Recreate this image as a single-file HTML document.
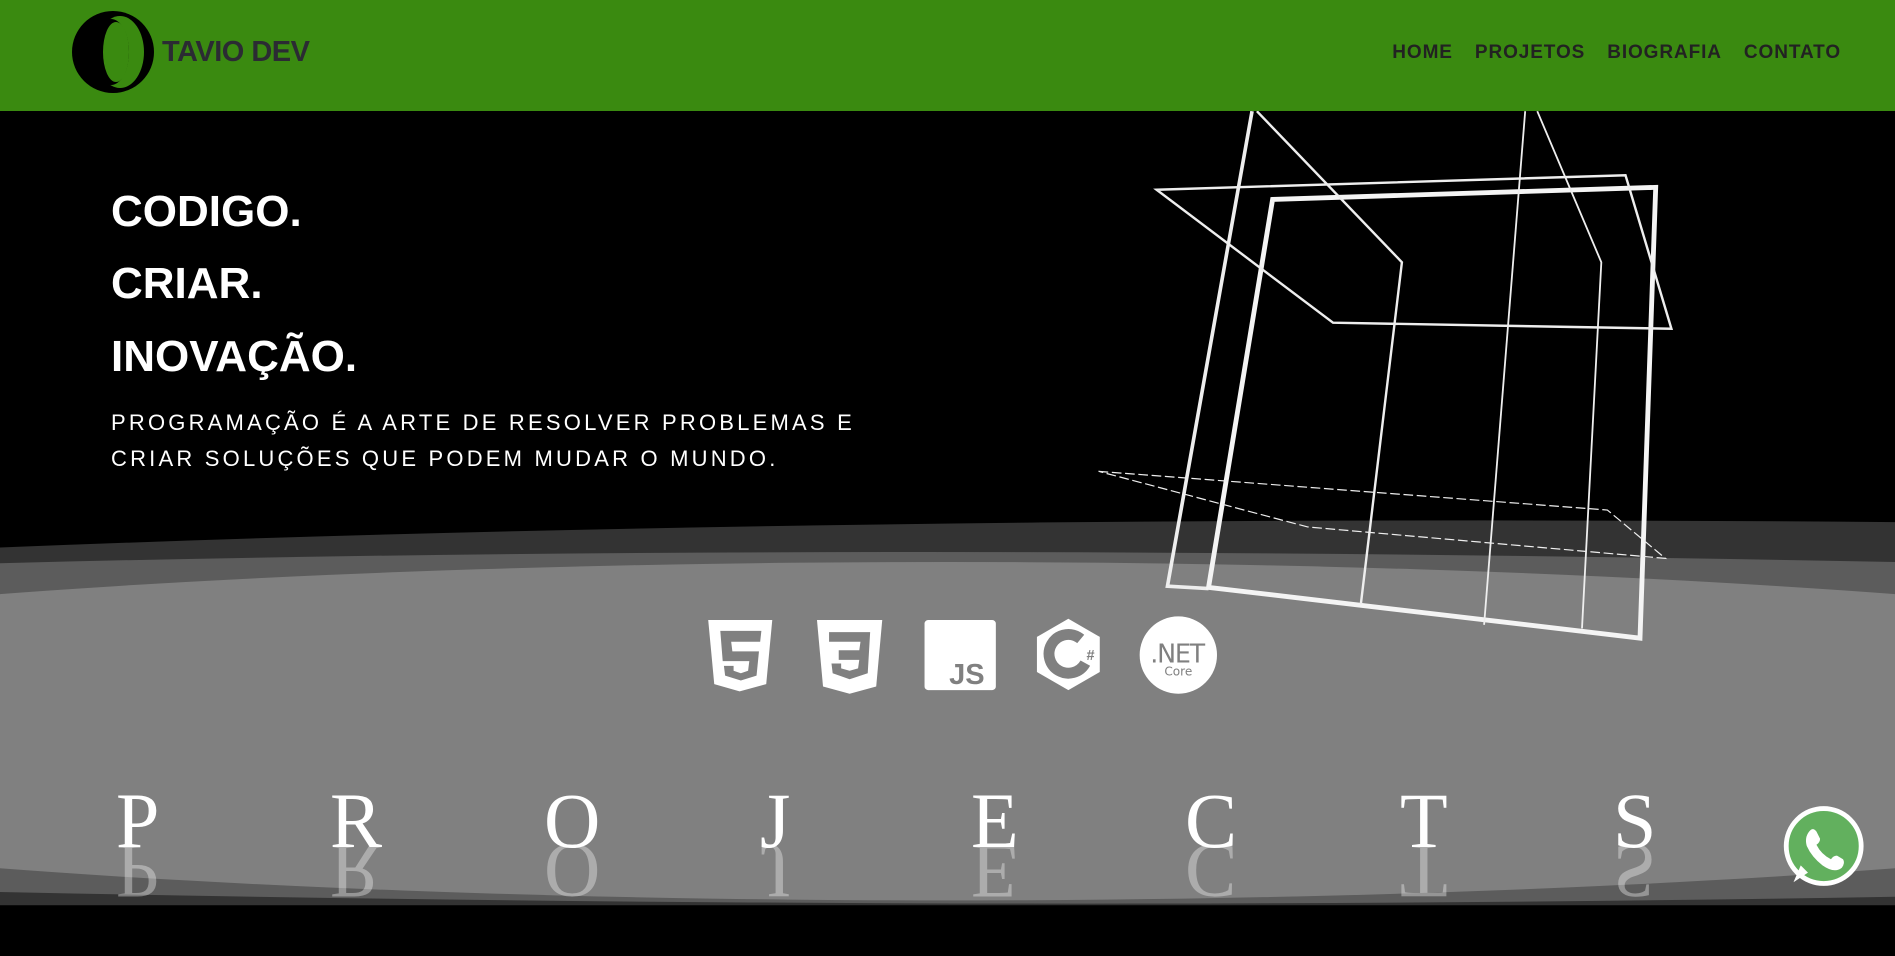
<!DOCTYPE html>
<html><head><meta charset="utf-8"><style>
*{margin:0;padding:0;box-sizing:border-box}
body{width:1895px;height:956px;overflow:hidden;background:#000;position:relative;font-family:"Liberation Sans",sans-serif}
#bg{position:absolute;left:0;top:0}
header{position:absolute;left:0;top:0;width:1895px;height:111px;background:#3a8a10}
.logo{position:absolute;left:162px;top:36px;font-size:29px;font-weight:bold;color:#2b2b33;letter-spacing:-0.5px}
nav{position:absolute;right:54px;top:42px;font-size:19px;font-weight:bold;color:#222;letter-spacing:0.9px}
nav span{margin-left:22px}
.h{position:absolute;left:111px;color:#fff;font-weight:bold;font-size:44px;line-height:50px}
.p{position:absolute;left:111px;top:405px;color:#fff;font-size:22px;letter-spacing:3.2px;line-height:36px}
.L{position:absolute;top:771px;font-family:"Liberation Serif",serif;font-size:78px;color:#fff;line-height:100px}
.R{position:absolute;top:821px;font-family:"Liberation Serif",serif;font-size:78px;line-height:100px;transform:scaleY(-1);color:rgba(255,255,255,.35)}
</style></head><body>
<svg id="bg" width="1895" height="956" viewBox="0 0 1568 791" preserveAspectRatio="none">
<path d="M0,453 Q700,425 1568,432 L1568,749 L0,749Z" fill="#333"/>
<path d="M0,466 Q700,448 1568,465 L1568,742 Q800,755 0,738Z" fill="#5c5c5c"/>
<ellipse cx="784" cy="605" rx="1337" ry="140" fill="#808080"/>
<g fill="none" stroke="#eee">
<path d="M1036,92 L966,485 L1000,487" stroke-width="3"/>
<path d="M1053,165 L1370,155 L1357,528 L1000,486Z" stroke-width="4" stroke="#f4f4f4"/>
<path d="M957,157 L1345,145 L1383,272 L1103,267Z" stroke-width="2"/>
<path d="M1040,92 L1160,217 L1126,500" stroke-width="2"/>
<path d="M1262,92 L1228,517" stroke-width="1.5"/>
<path d="M1272,92 L1325,217 L1309,520" stroke-width="1.5"/>
<path d="M909,390 L1330,422 L1378,462 L1082,436Z" stroke-width="1" stroke-dasharray="8,3"/>
</g>
<g fill="#fff">
<path d="M586,513 L639,513 L634,566 L612,572 L591,566Z"/>
<path d="M596,522 L630,522 L629,531 L605,531 L606,539 L628,539 L626,559 L613,563 L600,559 L599,551 L607,551 L607,555 L613,557 L619,555 L620,547 L598,547Z" fill="#808080"/>
<path d="M676,513 L730,513 L725,568 L703,574 L681,568Z"/>
<path d="M686,523 L720,523 L718,557 L703,562 L689,557 L688,549 L696,549 L696,553 L703,555 L710,553 L711,546 L694,546 L694,538 L711,538 L712,531 L686,531Z" fill="#808080"/>
<rect x="765" y="513" width="59" height="58" rx="3"/>
<path d="M884,512 L910,527 L910,556 L884,571 L858,556 L858,527Z"/>
<circle cx="884" cy="541" r="16" fill="none" stroke="#808080" stroke-width="9" stroke-dasharray="78,22" transform="rotate(30 884 541)"/>
<circle cx="975" cy="542" r="32"/>
</g>
<text x="800" y="566" font-family="Liberation Sans" font-weight="bold" font-size="24" fill="#808080" text-anchor="middle">JS</text>
<text x="899" y="546" font-family="Liberation Sans" font-weight="bold" font-size="12" fill="#808080">#</text>
<text x="974" y="548" font-family="DejaVu Sans" font-size="21" fill="#808080" text-anchor="middle" letter-spacing="-1">.NET</text>
<text x="975" y="559" font-family="DejaVu Sans" font-size="10" fill="#808080" text-anchor="middle">Core</text>
<circle cx="1509" cy="700" r="31" fill="#62b05e" stroke="#fff" stroke-width="4"/>
<path d="M1484,730 L1490,716 L1496,722Z" fill="#fff"/>
<path d="M1497,688 Q1500,684 1503,688 L1506,694 Q1506,697 1503,699 Q1507,707 1515,711 Q1517,708 1520,708 L1525,711 Q1527,714 1524,718 Q1518,723 1508,716 Q1499,709 1495,700 Q1493,693 1497,688Z" fill="#fff"/>
</svg>
<header>
<svg style="position:absolute;left:70px;top:10px" width="86" height="84" viewBox="0 0 86 84"><ellipse cx="43" cy="42" rx="41" ry="41" fill="#000"/><ellipse cx="50" cy="42" rx="24" ry="36" fill="#3a8a10"/><ellipse cx="41" cy="42" rx="18" ry="33" fill="#000"/><ellipse cx="46" cy="42" rx="13" ry="30" fill="#3a8a10"/></svg>
<div class="logo">TAVIO DEV</div>
<nav><span>HOME</span><span>PROJETOS</span><span>BIOGRAFIA</span><span>CONTATO</span></nav>
</header>
<div class="h" style="top:187px">CODIGO.</div>
<div class="h" style="top:259px">CRIAR.</div>
<div class="h" style="top:332px">INOVAÇÃO.</div>
<div class="p">PROGRAMAÇÃO É A ARTE DE RESOLVER PROBLEMAS E<br>CRIAR SOLUÇÕES QUE PODEM MUDAR O MUNDO.</div>
<div class="L" style="left:116px">P</div><div class="R" style="left:116px">P</div>
<div class="L" style="left:330px">R</div><div class="R" style="left:330px">R</div>
<div class="L" style="left:544px">O</div><div class="R" style="left:544px">O</div>
<div class="L" style="left:760px">J</div><div class="R" style="left:760px">J</div>
<div class="L" style="left:971px">E</div><div class="R" style="left:971px">E</div>
<div class="L" style="left:1185px">C</div><div class="R" style="left:1185px">C</div>
<div class="L" style="left:1400px">T</div><div class="R" style="left:1400px">T</div>
<div class="L" style="left:1613px">S</div><div class="R" style="left:1613px">S</div>
</body></html>
